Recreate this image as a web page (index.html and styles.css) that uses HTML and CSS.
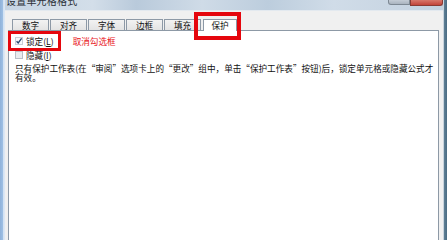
FILE: index.html
```html
<!DOCTYPE html>
<html lang="zh-CN">
<head>
<meta charset="utf-8">
<title>设置单元格格式</title>
<link rel="stylesheet" href="styles.css">
</head>
<body>
<div class="window">
  <div class="frame-left"></div>
  <div class="center">
    <div class="titlebar">
      <span class="title">设置单元格格式</span>
      <div class="caption">
        <span class="btn-min"></span>
        <span class="btn-close"></span>
      </div>
    </div>
    <div class="face">
      <div class="tabs">
        <div class="tab">数字</div>
        <div class="tab">对齐</div>
        <div class="tab">字体</div>
        <div class="tab">边框</div>
        <div class="tab">填充</div>
        <div class="tab tab-sel">保护</div>
      </div>
      <div class="panel">
        <div class="row">
          <svg class="cb" width="8" height="8" viewBox="0 0 8 8"><rect x="0.5" y="0.5" width="7" height="7" fill="#f7f8fa" stroke="#c9ced6"/><path d="M1.6 4.2 L3.2 6 L6.6 1.4" fill="none" stroke="#24466e" stroke-width="1.3"/></svg>
          <span class="label">锁定(<u>L</u>)</span>
          <span class="note">取消勾选框</span>
        </div>
        <div class="row">
          <svg class="cb" width="8" height="8" viewBox="0 0 8 8"><rect x="0.5" y="0.5" width="7" height="7" fill="#e9ebee" stroke="#b9bec6"/></svg>
          <span class="label">隐藏(<u>I</u>)</span>
        </div>
        <p class="desc">只有保护工作表(在“审阅”选项卡上的“更改”组中，单击“保护工作表”按钮)后，锁定单元格或隐藏公式才有效。</p>
      </div>
    </div>
  </div>
  <div class="frame-right"></div>
  <div class="mark mark-lock"></div>
  <div class="mark mark-tab"></div>
</div>
</body>
</html>
```
FILE: styles.css
```css
html, body {
  margin: 0;
  padding: 0;
  width: 100%;
  height: 100%;
  overflow: hidden;
  background: #ffffff;
  font-family: "Noto Sans CJK SC", "Noto Sans", sans-serif;
}
.window {
  position: relative;
  display: flex;
  width: 447px;
  height: 100vh;
  min-height: 206px;
}
.frame-left {
  width: 5px;
  flex: none;
  background: linear-gradient(90deg, #8fb2da 0, #9fc0e4 3px, #cfe0f2 3px, #dfe9f5 5px);
}
.frame-right {
  width: 4px;
  flex: none;
  background: linear-gradient(90deg, #c9d3dc 0, #c9d3dc 1px, #5f8096 1px, #4b6b82 4px);
}
.center {
  flex: 1;
  display: flex;
  flex-direction: column;
  min-width: 0;
}
.titlebar {
  height: 11px;
  flex: none;
  display: flex;
  align-items: flex-start;
  overflow: hidden;
  background: linear-gradient(90deg, #c6d5e4 0%, #d3dee9 20%, #b9cadb 30%, #cfdbe7 45%, #bccddd 60%, #d0dce8 75%, #c3d1df 100%);
  border-bottom: 1px solid #e3e9ef;
  box-sizing: border-box;
}
.title {
  margin-top: -5px;
  margin-left: 1px;
  font-size: 10px;
  line-height: 12px;
  color: #2a2f36;
  letter-spacing: 0.2px;
  white-space: nowrap;
}
.caption {
  margin-left: auto;
  display: flex;
  align-items: flex-start;
}
.btn-min {
  width: 20px;
  height: 4px;
  background: linear-gradient(#c4ccd5, #aab4bf);
  border: 1px solid #7d8893;
  border-top: none;
  border-radius: 0 0 0 3px;
}
.btn-close {
  width: 31px;
  height: 5px;
  background: linear-gradient(#d7776b, #c2443a);
  border: 1px solid #8a3a33;
  border-top: none;
  border-radius: 0 0 3px 0;
}
.face {
  flex: 1;
  display: flex;
  flex-direction: column;
  padding: 7px 4px 0 3px;
  background: #f0f0f0;
}
.tabs {
  display: flex;
  align-items: flex-end;
  height: 12px;
  padding-left: 4px;
  gap: 1px;
}
.tab {
  width: 37px;
  height: 11px;
  box-sizing: border-box;
  border: 1px solid #8d99a6;
  border-bottom: none;
  background: linear-gradient(#f2f2f2, #e3e3e3);
  font-size: 8.6px;
  line-height: 10px;
  text-align: center;
  color: #111111;
}
.tab-sel {
  width: 34px;
  height: 12px;
  margin-left: 1px;
  margin-bottom: -1px;
  background: #ffffff;
  border-color: #8d99a6;
  position: relative;
  z-index: 1;
}
.panel {
  flex: 1;
  background: #ffffff;
  border: 1px solid #8d99a6;
  border-bottom: none;
  padding: 5px 6px 0 6px;
}
.row {
  display: flex;
  align-items: center;
  height: 10px;
  margin-bottom: 4px;
  gap: 3px;
  font-size: 8.6px;
  line-height: 10px;
  color: #111111;
}
.row u {
  text-decoration-thickness: 0.6px;
  text-underline-offset: 1px;
}
.cb {
  flex: none;
}
.note {
  margin-left: 16px;
  color: #e8141b;
  font-size: 8.6px;
}
.desc {
  margin: 0;
  font-size: 8.6px;
  line-height: 9px;
  color: #111111;
  width: 422px;
}
.mark {
  position: absolute;
  box-sizing: border-box;
  border: 4px solid #e5060d;
}
.mark-lock {
  left: 8px;
  top: 31px;
  width: 53px;
  height: 20px;
  border-width: 3.5px;
}
.mark-tab {
  left: 194px;
  top: 12px;
  width: 47px;
  height: 28px;
}
```
